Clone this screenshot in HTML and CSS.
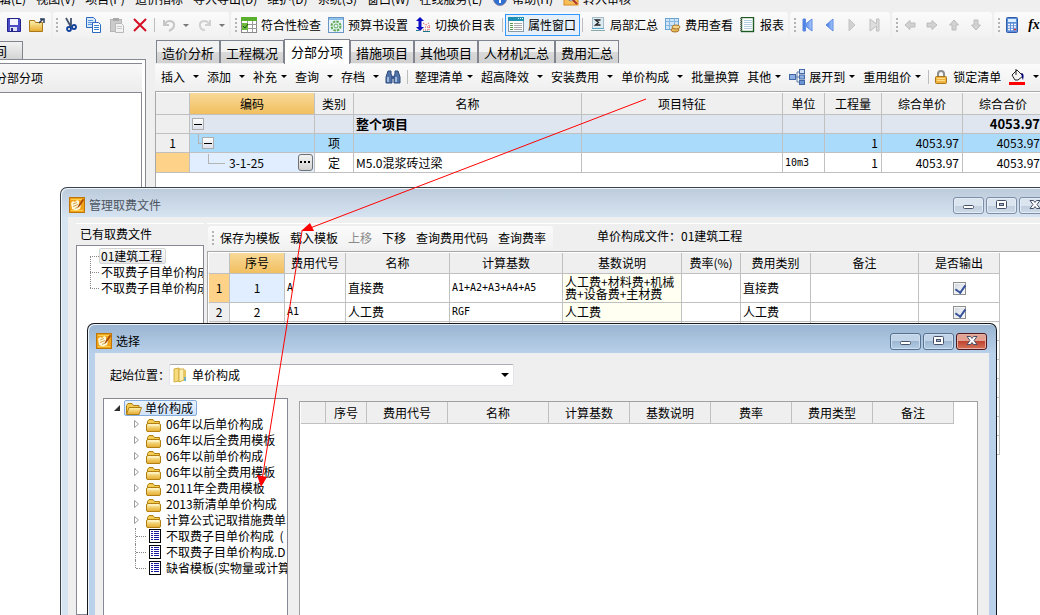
FILE: index.html
```html
<!DOCTYPE html>
<html lang="zh-CN">
<head>
<meta charset="utf-8">
<title>分部分项</title>
<link rel="stylesheet" href="styles.css">
</head>
<body>
<svg class="defs" aria-hidden="true">
  <defs>
    <linearGradient id="gold" x1="0" y1="0" x2="0" y2="1"><stop offset="0" stop-color="#fdf3b4"/><stop offset="1" stop-color="#e6a92c"/></linearGradient>
    <linearGradient id="blue" x1="0" y1="0" x2="1" y2="0"><stop offset="0" stop-color="#3c74e0"/><stop offset="1" stop-color="#a9c8fa"/></linearGradient>
    <symbol id="folder" viewBox="0 0 18 16">
      <path d="M1.500 13.500V5.500L3 3.500h4l1.500 2h5v2" fill="#f3cb52" stroke="#b07f10"/>
      <rect x=".500" y="7.500" width="14" height="8" rx="1.500" fill="url(#gold)" stroke="#b07f10"/>
      <path d="M2 9h11" stroke="#fffbe0"/>
    </symbol>
    <symbol id="folder-open" viewBox="0 0 18 16">
      <path d="M1.500 14V5.500L3 3.500h4l1.500 2h5.500v2" fill="#f3cb52" stroke="#b07f10"/>
      <path d="M1.500 14.500L4 7.500h12.500l-2.500 7z" fill="url(#gold)" stroke="#b07f10"/>
    </symbol>
    <symbol id="sheet" viewBox="0 0 14 16">
      <rect x="1.500" y="1.500" width="11" height="13" fill="#fff" stroke="#000"/>
      <path d="M3 3.500h2m1 0h5M3 5.500h2m1 0h5M3 7.500h2m1 0h5M3 9.500h2m1 0h5M3 11.500h2m1 0h5" stroke="#1a1a9c"/>
    </symbol>
    <symbol id="tri" viewBox="0 0 7 10"><path d="M1.500 1.500v7L5.500 5z" fill="#fff" stroke="#9a9a9a"/></symbol>
    <symbol id="app" viewBox="0 0 16 16">
      <rect x=".500" y=".500" width="15" height="15" fill="#f0a21c" stroke="#c07508"/>
      <path d="M2 2.500h12M2 13.500h12" stroke="#ffd24c"/>
      <path d="M2 6l2-2 2 1 2-2 2 1v3l2 1-1 4-4 1.500L3 12z" fill="#fff8d8"/>
      <path d="M4 7l4-1.500M4 9.500l5-2M6 11.500l4-2" stroke="#c88a2c" stroke-width=".800"/>
      <path d="M14 1.500L9.500 8l-1 3 2.500-2L15 3z" fill="#a84708"/>
    </symbol>
    <symbol id="arrow-l" viewBox="0 0 12 12"><path d="M1 6l5-4.500v2.500h5v4H6v2.500z" fill="#d2d2d2" stroke="#bcbcbc"/></symbol>
    <symbol id="min" viewBox="0 0 12 12"><rect x=".500" y="6.500" width="10" height="3" rx="1" fill="#fff" stroke="#465066"/></symbol>
    <symbol id="max" viewBox="0 0 12 12"><rect x=".500" y="1.500" width="10" height="8" rx="1" fill="#fff" stroke="#465066"/><rect x="3.500" y="4.500" width="4" height="2" fill="#a9b9cd" stroke="#465066"/></symbol>
    <symbol id="close" viewBox="0 0 12 12"><path d="M1 1.500h3.500L6 3.500l1.500-2H11L8 5.500l3 4H7.500L6 7.500l-1.500 2H1l3-4z" fill="#fff" stroke="#465066"/></symbol>
  </defs>
</svg>

<div class="app">
  <nav class="menubar">
    <button>编辑(E)</button><button>视图(V)</button><button>项目(P)</button><button>造价指标</button><button>导入导出(D)</button><button>维护(D)</button><button>系统(S)</button><button>窗口(W)</button><button>在线服务(L)</button>
    <button><svg class="icon" viewBox="0 0 16 16"><circle cx="8" cy="8" r="6.500" fill="#2e6fd0" stroke="#88a"/><path d="M8 9v3" stroke="#fff" stroke-width="2"/></svg>帮助(H)</button>
    <button><svg class="icon" viewBox="0 0 16 16"><rect x="1" y="2" width="14" height="12" fill="#f9bf57" stroke="#d88a20"/><circle cx="8" cy="7" r="3" fill="#fff" stroke="#888"/><path d="M10 9l4 4" stroke="#a33" stroke-width="2"/></svg>转入审核</button>
  </nav>

  <div class="toolbar-row">
    <div class="group first">
      <button class="ib" aria-label="保存"><svg class="icon" viewBox="0 0 16 16"><path d="M1.500 1.500h12l1 1v12h-13z" fill="#4b4bc6" stroke="#23238c"/><rect x="4" y="2" width="8" height="6" fill="#f4f4ff"/><rect x="4" y="10" width="7" height="4" fill="#dfe0f4"/><rect x="5" y="11" width="2" height="3" fill="#23238c"/></svg></button>
      <button class="ib" aria-label="打开"><svg class="icon" viewBox="0 0 16 16"><path d="M.500 14.500v-11h5l1 2h7v9z" fill="url(#gold)" stroke="#a8781a"/><path d="M10 6l4-4m-3 0h4v4" fill="none" stroke="#2c3c5c" stroke-width="1.500"/></svg></button>
    </div>
    <div class="group edit">
      <i class="grip"></i>
      <button class="ib" aria-label="剪切"><svg class="icon" viewBox="0 0 16 16"><path d="M3 1l5 9M8 1v9" stroke="#41536c" stroke-width="1.800"/><circle cx="6" cy="12" r="2" fill="none" stroke="#12419c" stroke-width="1.800"/><circle cx="11" cy="10" r="2" fill="none" stroke="#12419c" stroke-width="1.800"/></svg></button>
      <button class="ib" aria-label="复制"><svg class="icon" viewBox="0 0 16 16"><path d="M.500 .500h7l2 2v8h-9z" fill="#d8e8fb" stroke="#2a6bc0"/><path d="M2 3.500h5M2 5.500h5M2 7.500h4" stroke="#5b96dc"/><path d="M6.500 5.500h6l2 2v8h-8z" fill="#fff" stroke="#2a6bc0"/><path d="M8 8.500h5M8 10.500h5M8 12.500h5" stroke="#3c80d4"/></svg></button>
      <button class="ib" aria-label="粘贴"><svg class="icon" viewBox="0 0 16 16"><rect x="1.500" y="2.500" width="11" height="12" fill="#cbcbcb" stroke="#b4b4b4"/><rect x="4" y="1" width="6" height="3" fill="#a9a9a9"/><path d="M6.500 6.500h6l2 2v7h-8z" fill="#f2f2f2" stroke="#b9b9b9"/><path d="M8 9.500h5M8 11.500h5" stroke="#ccc"/></svg></button>
      <button class="ib" aria-label="删除"><svg class="icon" viewBox="0 0 16 16"><path d="M2 2l12 12M14 2L2 14" stroke="#d40f26" stroke-width="2"/></svg></button>
      <i class="sep"></i>
      <button class="ib" aria-label="撤销"><svg class="icon" viewBox="0 0 16 16"><path d="M3 3v5h5M4 7c3-5 10-3 9 2-.500 3-3 4-5 5" fill="none" stroke="#c6c6c6" stroke-width="2"/></svg></button>
      <i class="caret dim"></i>
      <button class="ib" aria-label="重做"><svg class="icon" viewBox="0 0 16 16"><path d="M13 3v5H8M12 7C9 2 2 4 3 9c.500 3 3 4 5 4" fill="none" stroke="#d0d0d0" stroke-width="2"/></svg></button>
      <i class="caret dim"></i>
    </div>
    <div class="group main">
      <i class="grip"></i>
      <button class="tb"><svg class="icon" viewBox="0 0 16 16"><rect x=".500" y=".500" width="15" height="15" fill="#fff" stroke="#888"/><rect width="16" height="4" fill="#58b02c"/><path d="M0 7.500h16M0 11.500h16M6.500 4v12M11.500 4v12" stroke="#999"/><rect x="1" y="6" width="6" height="7" fill="#6dbb3c"/><path d="M2 9l2 2 3-4" fill="none" stroke="#185010"/></svg>符合性检查</button>
      <button class="tb"><svg class="icon" viewBox="0 0 16 16"><rect x=".500" y=".500" width="15" height="15" fill="#e8f3fd" stroke="#6a96c4"/><path d="M1 2h14" stroke="#8ec0ec" stroke-width="2"/><circle cx="8" cy="9" r="4.500" fill="none" stroke="#61ac52" stroke-width="2" stroke-dasharray="2.500 1"/><circle cx="8" cy="9" r="2" fill="none" stroke="#61ac52"/></svg>预算书设置</button>
      <button class="tb"><svg class="icon" viewBox="0 0 16 16"><path d="M5 0l4 4H6.500v6H9l-4 4-4-4h2.500V4H1z" fill="#0b0bc4"/><path d="M8 6l3 2 3-2M8 13h6V7M10 10h5" fill="none" stroke="#d44" stroke-dasharray="1 1"/><path d="M8 14.500h7M1 13.500h3" stroke="#178"/></svg>切换价目表</button>
      <i class="sep"></i>
      <button class="tb checked"><svg class="icon" viewBox="0 0 16 16"><rect x=".500" y=".500" width="15" height="14" fill="#fff" stroke="#8a9aa8"/><rect width="16" height="4" fill="#1e90b4"/><path d="M10 1.500h5" stroke="#e8f8ff" stroke-dasharray="1 1"/><path d="M2 6.500h3M2 8.500h3M2 10.500h3M2 12.500h3" stroke="#569a50"/><path d="M6 6.500h8M6 8.500h8M6 10.500h8M6 12.500h8" stroke="#aaa"/></svg>属性窗口</button>
      <i class="sep"></i>
      <button class="tb"><svg class="icon" viewBox="0 0 16 16"><rect x="2.500" y=".500" width="11" height="11" fill="#dcebf2" stroke="#a6bcc8"/><path d="M10.500 3H5.500l3 2.500-3 2.500h5" fill="none" stroke="#222" stroke-width="1.300"/><path d="M1 13.500h14" stroke="#8aa"/><path d="M2 11.500h12" stroke="#5ac"/></svg>局部汇总</button>
      <button class="tb"><svg class="icon" viewBox="0 0 16 16"><rect x=".500" y="1.500" width="13" height="11" fill="#cfe5f7" stroke="#69a4d4"/><path d="M1 4.500h12M1 8.500h12M4.500 2v10M9.500 2v10" stroke="#84b8e0"/><ellipse cx="10" cy="13" rx="4" ry="2" fill="#e8b85c" stroke="#a8742c"/><ellipse cx="11" cy="10" rx="4" ry="2" fill="#f5d48c" stroke="#a8742c"/></svg>费用查看</button>
      <button class="tb"><svg class="icon" viewBox="0 0 16 16"><rect x="1.500" y=".500" width="12" height="14" fill="#fff" stroke="#1c5c24" stroke-width="1.400"/><path d="M1 1v14" stroke="#777" stroke-width="2" stroke-dasharray="1 1"/><path d="M4 3.500h8M4 5.500h8M4 7.500h8M4 9.500h8M4 11.500h8" stroke="#b5cde0"/></svg>报表</button>
    </div>
    <div class="group nav">
      <i class="grip"></i>
      <button class="ib" aria-label="第一条"><svg class="icon" viewBox="0 0 16 16"><path d="M3 2h2.500v5L12 2v12L5.500 9v5H3z" fill="url(#blue)" stroke="#5c8be4"/></svg></button>
      <button class="ib" aria-label="上一条"><svg class="icon" viewBox="0 0 16 16"><path d="M11 2v12L4 8z" fill="url(#blue)" stroke="#5c8be4"/></svg></button>
      <button class="ib" aria-label="下一条"><svg class="icon" viewBox="0 0 16 16"><path d="M5 2v12l6-6z" fill="#d2d2d2" stroke="#c4c4c4"/></svg></button>
      <button class="ib" aria-label="最后一条"><svg class="icon" viewBox="0 0 16 16"><path d="M13 2h-2.500v5L4 2v12l6.500-5v5H13z" fill="#dedede" stroke="#bfbfbf"/></svg></button>
    </div>
    <div class="group nav">
      <i class="grip"></i>
      <button class="ib" aria-label="左移"><svg class="icon small"><use href="#arrow-l"/></svg></button>
      <button class="ib" aria-label="右移"><svg class="icon small r180"><use href="#arrow-l"/></svg></button>
      <button class="ib" aria-label="上移"><svg class="icon small r90"><use href="#arrow-l"/></svg></button>
      <button class="ib" aria-label="下移"><svg class="icon small r270"><use href="#arrow-l"/></svg></button>
    </div>
    <div class="group last">
      <i class="grip"></i>
      <button class="ib calc" aria-label="计算器"><svg class="icon" viewBox="0 0 16 16"><rect x="2.500" y=".500" width="11" height="15" rx="1" fill="#5e8ed8" stroke="#2f5daa"/><rect x="4" y="2" width="8" height="3" fill="#dcefff"/><path d="M4 7.500h8M4 10h8M4 12.500h8" stroke="#fff" stroke-width="1.500" stroke-dasharray="2 1"/><path d="M10 12.500h2" stroke="#d33" stroke-width="1.500"/></svg></button>
      <button class="ib fx"><i>fx</i></button>
    </div>
  </div>

  <div class="workspace">
    <aside class="side">
      <button class="side-tab"><span>间</span></button>
      <div class="side-frame">
        <div class="side-title"><span>分部分项</span></div>
        <div class="side-list"></div>
      </div>
    </aside>
    <main class="content">
      <div class="tabs">
        <button>造价分析</button><button>工程概况</button><button class="active">分部分项</button><button>措施项目</button><button>其他项目</button><button>人材机汇总</button><button>费用汇总</button>
      </div>
      <div class="actions">
        <button class="wide">插入<i class="caret"></i></button>
        <button class="wide">添加<i class="caret"></i></button>
        <button>补充<i class="caret"></i></button>
        <button class="wide">查询<i class="caret"></i></button>
        <button class="wide">存档<i class="caret"></i></button>
        <button class="find" aria-label="查找"><svg class="icon" viewBox="0 0 16 16"><path d="M3 2h3v3l1 2v7H1V8z M10 2h3l2 6v6H9V7l1-2z" fill="#5273a8" stroke="#2b4a7c"/><path d="M6 7h4v3H6z" fill="#3c5a90"/><path d="M3 8v5M11 8v5" stroke="#bcd0ee" stroke-width="1.500"/></svg></button>
        <i class="sep"></i>
        <button>整理清单<i class="caret"></i></button>
        <button class="wide">超高降效<i class="caret"></i></button>
        <button class="wide">安装费用<i class="caret"></i></button>
        <button class="wide">单价构成<i class="caret"></i></button>
        <button>批量换算</button>
        <button>其他<i class="caret"></i></button>
        <button><svg class="icon" viewBox="0 0 16 16"><path d="M5 8h3V3h3M8 8h3M8 8v5h3" fill="none" stroke="#5c7ca8"/><rect x=".500" y="5.500" width="6" height="5" fill="#8cb0e4" stroke="#4468a4"/><rect x="10.500" y=".500" width="5" height="4" fill="#cfe0f8" stroke="#4468a4"/><rect x="10.500" y="6" width="5" height="4" fill="#8cb0e4" stroke="#4468a4"/><rect x="10.500" y="11.500" width="5" height="4" fill="#6c94d4" stroke="#4468a4"/></svg>展开到<i class="caret"></i></button>
        <button>重用组价<i class="caret"></i></button>
        <i class="sep"></i>
        <button class="lock"><svg class="icon" viewBox="0 0 16 16"><path d="M5 8V5a3 3 0 0 1 6 0v3" fill="none" stroke="#8c8c8c" stroke-width="2"/><rect x="2.500" y="7.500" width="11" height="7" rx="1" fill="#f0b43c" stroke="#a8741c"/><path d="M4 9.500h8M4 11.500h8" stroke="#fbdc90"/></svg>锁定清单</button>
        <button class="wide" aria-label="填充颜色"><svg class="icon" viewBox="0 0 16 16"><path d="M3 6l5-5 6 6-5 4H6z" fill="#f4f4f4" stroke="#222"/><path d="M7 0v6" stroke="#222"/><path d="M12 4c3 0 3 3 2 7-1-1-1-4-2-7z" fill="#000080"/><rect y="13" width="16" height="3" fill="#f00"/></svg><i class="caret"></i></button>
      </div>
      <div class="grid-wrap">
        <table class="grid items">
          <colgroup><col class="w34"><col class="w125"><col class="w39"><col class="w228"><col class="w201"><col class="w42"><col class="w57"><col class="w81"><col class="w81"></colgroup>
          <thead><tr><th></th><th class="hot">编码</th><th>类别</th><th>名称</th><th>项目特征</th><th>单位</th><th>工程量</th><th>综合单价</th><th>综合合价</th></tr></thead>
          <tbody>
            <tr class="total"><th></th><td><span class="code"><button class="box" aria-label="折叠"></button></span></td><td></td><td>整个项目</td><td></td><td></td><td></td><td></td><td class="num">4053.97</td></tr>
            <tr class="group-row"><th>1</th><td><span class="code"><i class="elbow e1"></i><button class="box" aria-label="折叠"></button></span></td><td class="mid">项</td><td></td><td></td><td></td><td class="num">1</td><td class="num">4053.97</td><td class="num">4053.97</td></tr>
            <tr><th class="mark"></th><td class="focus"><span class="code"><i class="elbow e2"></i>3-1-25<button class="more" aria-label="更多"><svg viewBox="0 0 11 3"><path d="M0 0h2v2H0zM4 0h2v2H4zM8 0h2v2H8z"/></svg></button></span></td><td class="mid">定</td><td>M5.0混浆砖过梁</td><td></td><td class="mono">10m3</td><td class="num">1</td><td class="num">4053.97</td><td class="num">4053.97</td></tr>
          </tbody>
        </table>
      </div>
    </main>
  </div>
</div>

<section class="window manage">
  <header><svg class="icon"><use href="#app"/></svg><h2>管理取费文件</h2>
    <button aria-label="最小化"><svg><use href="#min"/></svg></button><button aria-label="最大化"><svg><use href="#max"/></svg></button><button aria-label="关闭"><svg><use href="#close"/></svg></button></header>
  <div class="client manage-body">
    <div class="files">
      <h3>已有取费文件</h3>
      <ul class="file-list"><li><span class="sel">01建筑工程</span></li><li><span>不取费子目单价构成</span></li><li><span>不取费子目单价构成</span></li></ul>
    </div>
    <div class="fees">
      <div class="fee-bar">
        <div class="group fee-tools"><i class="grip"></i><button>保存为模板</button><button>载入模板</button><button disabled>上移</button><button>下移</button><button>查询费用代码</button><button>查询费率</button></div>
        <span class="fee-file">单价构成文件：01建筑工程</span>
      </div>
      <div class="fee-grid">
        <table class="grid">
          <colgroup><col class="w21"><col class="w55"><col class="w61"><col class="w104"><col class="w113"><col class="w119"><col class="w59"><col class="w70"><col class="w108"><col class="w81"></colgroup>
          <thead><tr><th></th><th class="hot">序号</th><th>费用代号</th><th>名称</th><th>计算基数</th><th>基数说明</th><th>费率(%)</th><th>费用类别</th><th>备注</th><th>是否输出</th></tr></thead>
          <tbody>
            <tr class="tall"><th class="mark">1</th><td class="mid focus">1</td><td class="mono">A</td><td>直接费</td><td class="mono">A1+A2+A3+A4+A5</td><td class="note">人工费+材料费+机械费+设备费+主材费</td><td></td><td>直接费</td><td></td><td class="mid"><input type="checkbox" checked aria-label="直接费输出"></td></tr>
            <tr><th>2</th><td class="mid">2</td><td class="mono">A1</td><td>人工费</td><td class="mono">RGF</td><td class="note">人工费</td><td></td><td>人工费</td><td></td><td class="mid"><input type="checkbox" checked aria-label="人工费输出"></td></tr>
            <tr><th></th><td></td><td></td><td></td><td></td><td></td><td></td><td></td><td></td><td></td></tr>
            <tr><th></th><td></td><td></td><td></td><td></td><td></td><td></td><td></td><td></td><td></td></tr>
            <tr><th></th><td></td><td></td><td></td><td></td><td></td><td></td><td></td><td></td><td></td></tr>
            <tr><th></th><td></td><td></td><td></td><td></td><td></td><td></td><td></td><td></td><td></td></tr>
            <tr><th></th><td></td><td></td><td></td><td></td><td></td><td></td><td></td><td></td><td></td></tr>
            <tr><th></th><td></td><td></td><td></td><td></td><td></td><td></td><td></td><td></td><td></td></tr>
            <tr><th></th><td></td><td></td><td></td><td></td><td></td><td></td><td></td><td></td><td></td></tr>
          </tbody>
        </table>
      </div>
    </div>
  </div>
</section>

<section class="window choose">
  <header><svg class="icon"><use href="#app"/></svg><h2>选择</h2>
    <button aria-label="最小化"><svg><use href="#min"/></svg></button><button aria-label="最大化"><svg><use href="#max"/></svg></button><button class="danger" aria-label="关闭"><svg><use href="#close"/></svg></button></header>
  <div class="client choose-body">
    <div class="place">
      <label for="place">起始位置：</label>
      <div class="combo">
        <svg class="icon" viewBox="0 0 16 16"><path d="M2 2l5-1v13l-5 1z" fill="#f6dc7c" stroke="#d2ac40"/><path d="M7 2h5v11l-5 2z" fill="#fbeeb0" stroke="#d2ac40"/><path d="M12 3h2v10l-3 1" fill="#e8c45c"/><path d="M13 10v4" stroke="#48a8e0" stroke-width="1.500"/></svg>
        <select id="place"><option>单价构成</option></select>
        <i class="caret"></i>
      </div>
    </div>
    <div class="panes">
      <ul class="tree">
        <li class="root"><i class="tri-open"></i><span class="sel"><svg class="fold"><use href="#folder-open"/></svg>单价构成</span></li>
        <li><svg class="tri"><use href="#tri"/></svg><svg class="fold"><use href="#folder"/></svg>06年以后单价构成</li>
        <li><svg class="tri"><use href="#tri"/></svg><svg class="fold"><use href="#folder"/></svg>06年以后全费用模板</li>
        <li><svg class="tri"><use href="#tri"/></svg><svg class="fold"><use href="#folder"/></svg>06年以前单价构成</li>
        <li><svg class="tri"><use href="#tri"/></svg><svg class="fold"><use href="#folder"/></svg>06年以前全费用模板</li>
        <li><svg class="tri"><use href="#tri"/></svg><svg class="fold"><use href="#folder"/></svg>2011年全费用模板</li>
        <li><svg class="tri"><use href="#tri"/></svg><svg class="fold"><use href="#folder"/></svg>2013新清单单价构成</li>
        <li><svg class="tri"><use href="#tri"/></svg><svg class="fold"><use href="#folder"/></svg>计算公式记取措施费单</li>
        <li class="leaf"><svg class="doc"><use href="#sheet"/></svg>不取费子目单价构成&nbsp; (</li>
        <li class="leaf"><svg class="doc"><use href="#sheet"/></svg>不取费子目单价构成.D</li>
        <li class="leaf end"><svg class="doc"><use href="#sheet"/></svg>缺省模板(实物量或计算</li>
      </ul>
      <div class="pick-grid">
        <table class="grid">
          <colgroup><col class="w25"><col class="w41"><col class="w81"><col class="w101"><col class="w81"><col class="w81"><col class="w81"><col class="w81"><col class="w81"></colgroup>
          <thead><tr><th></th><th>序号</th><th>费用代号</th><th>名称</th><th>计算基数</th><th>基数说明</th><th>费率</th><th>费用类型</th><th>备注</th></tr></thead>
        </table>
      </div>
    </div>
  </div>
</section>

<svg class="arrows" viewBox="0 0 1040 615" aria-hidden="true">
  <path d="M646 99L305 230M302 231L262 480" fill="none" stroke="#f00"/>
  <path d="M301 231l9-8 4 8zM261 487l-4-12 10 2z" fill="#f00"/>
</svg>
</body>
</html>
```
FILE: styles.css
```css
* { box-sizing: border-box; }
html, body { height: 100%; margin: 0; }
body {
  position: relative;
  overflow: hidden;
  background: #efefef;
  color: #000;
  font: 12px/16px "Noto Sans CJK SC", "Liberation Sans", sans-serif;
}
button, select, input { font: inherit; color: inherit; margin: 0; }
button { padding: 0; border: 0; background: none; display: flex; align-items: center; justify-content: center; white-space: nowrap; }
h2, h3 { margin: 0; font-size: 12px; font-weight: 400; }
ul { list-style: none; margin: 0; padding: 0; }
.defs { position: absolute; width: 0; height: 0; }
.icon { width: 16px; height: 16px; flex: none; }
.mono { font-family: "DejaVu Sans Mono", "Noto Sans CJK SC", monospace; font-size: 10px; }

.app { height: 100%; display: flex; flex-direction: column; }

.menubar { flex: none; height: 12px; margin-left: -13px; padding-bottom: 5px; display: flex; align-items: flex-end; gap: 10px; overflow: hidden; }
.menubar button { height: 16px; gap: 4px; }

.toolbar-row { flex: none; display: flex; gap: 2px; height: 26px; white-space: nowrap; }
.group { flex: none; display: flex; align-items: center; border-radius: 3px; background: linear-gradient(#fbfbfb, #f1f1f1); }
.grip { flex: none; width: 2px; height: 14px; background: repeating-linear-gradient(#b4b4b4 0 2px, transparent 2px 4px); }
.sep { flex: none; width: 1px; height: 14px; background: #bdbdbd; }
.caret { flex: none; width: 0; height: 0; border: 3px solid transparent; border-top-color: #000; border-bottom: 0; }
.caret.dim { border-top-color: #777; }
.ib { width: 22px; height: 22px; }
.first { width: 51px; padding-left: 3px; gap: 1px; }
.edit { width: 176px; padding-left: 3px; gap: 1px; }
.edit .grip { margin-right: 1px; }
.edit .sep { margin: 0 2px; }
.edit .caret { margin: 0 4px 0 2px; }
.main { width: 557px; padding-left: 4px; gap: 7px; }
.main .grip { margin-right: -3px; }
.tb { height: 22px; gap: 4px; }
.tb.checked { padding: 0 3px 0 2px; margin: 0 -5px; border: 1px solid #3399ff; background: #e6f0fa; }
.nav { width: 100px; padding-left: 4px; }
.nav .grip { margin-right: 1px; }
.icon.small { width: 12px; height: 12px; }
.r180 { transform: rotate(180deg); }
.r90 { transform: rotate(90deg); }
.r270 { transform: rotate(270deg); }
.last { flex: 1 0 46px; padding-left: 4px; }
.calc { margin-left: 1px; }
.fx { font: italic 700 14px "Liberation Serif", serif; }

.workspace { flex: 1; min-height: 0; display: flex; gap: 9px; }
.side { flex: none; width: 146px; padding-top: 3px; display: flex; flex-direction: column; }
.side-tab { width: 23px; height: 18px; border: 1px solid #80848f; border-width: 1px 1px 0 0; background: linear-gradient(#f2f2f2, #d4d4d4); overflow: hidden; justify-content: flex-start; font-size: 13px; }
.side-tab span { margin-left: -6px; }
.side-frame { flex: 1; display: flex; flex-direction: column; border: 1px solid #868993; border-width: 1px 1px 0 0; padding: 3px 3px 0 0; background: #fff; }
.side-title { height: 29px; border-top: 1px solid #868993; background: linear-gradient(#f8f8f8, #ececec); display: flex; align-items: center; }
.side-title span { margin-left: -5px; }
.side-list { flex: 1; border: 1px solid #868993; border-width: 1px 1px 0 0; background: #fff; }

.content { flex: 1; min-width: 0; display: flex; flex-direction: column; }
.tabs { flex: none; height: 26px; padding: 1px 0 0 1px; display: flex; align-items: flex-end; }
.tabs button { height: 23px; margin-bottom: 1px; padding: 2px 5px 0; border: 1px solid #80848f; border-bottom: 0; background: linear-gradient(#f2f2f2 50%, #dadada 50%, #d0d0d0); font-size: 13px; }
.tabs .active { height: 25px; margin-bottom: 0; padding: 0 6px 1px; background: #fff; }
.actions { flex: none; height: 27px; padding: 0 0 2px 6px; display: flex; align-items: center; gap: 8px; background: linear-gradient(#fbfbfb, #efefef); white-space: nowrap; overflow: hidden; }
.actions button { flex: none; gap: 4px; }
.actions .wide { gap: 8px; }
.actions .sep { margin: 0 -1px; }
.find { margin: 0 -1px 0 -2px; }
.lock { margin-left: -3px; }

.grid-wrap { flex: 1; overflow: hidden; border: 1px solid #a8a8a8; border-width: 1px 0 0 1px; background: #fff; padding-top: 1px; }
.grid { table-layout: fixed; width: 0; border-collapse: separate; border-spacing: 0; }
.grid th, .grid td { height: 19px; padding: 0 0 0 2px; border: 1px solid #c0c0c0; border-width: 0 1px 1px 0; font-weight: 400; text-align: left; line-height: 16px; white-space: nowrap; overflow: hidden; }
.grid th { padding: 0; background: #efefef; text-align: center; }
.grid thead th { height: 21px; }
.items thead th { height: 22px; }
.grid th.hot { background: linear-gradient(#f9d999, #f1bf5f); }
.grid th.mark { background: #ffd28a; }
.grid .num { text-align: right; padding-right: 3px; }
.grid .mid { text-align: center; padding: 0; }
.grid .focus { background: #e0eeff; }
.total td { background: #dfe6f0; font-size: 13px; font-weight: 700; }
.group-row td { background: #aadbfb; }
.items tr:last-child td { height: 20px; }
.code { display: flex; align-items: center; height: 18px; }
.box { flex: none; width: 12px; height: 12px; border: 1px solid #adadad; background: linear-gradient(#000, #000) center / 8px 1px no-repeat, linear-gradient(#fff, #dde0ea); }
.elbow { flex: none; height: 10px; align-self: flex-start; border: 1px solid #b4b4b4; border-width: 0 0 1px 1px; }
.e1 { width: 4px; margin-left: 6px; }
.e2 { width: 17px; margin: 0 4px 0 16px; }
.more { width: 15px; height: 17px; margin: 0 1px 0 auto; border: 1px solid #707070; border-radius: 3px; background: linear-gradient(#f4f4f4, #d2d2d2); }
.more svg { width: 11px; height: 3px; }

.w21 { width: 21px; } .w25 { width: 25px; } .w34 { width: 34px; } .w39 { width: 39px; }
.w41 { width: 41px; } .w42 { width: 42px; } .w55 { width: 55px; } .w57 { width: 57px; }
.w59 { width: 59px; } .w61 { width: 61px; } .w70 { width: 70px; } .w81 { width: 81px; }
.w101 { width: 101px; } .w104 { width: 104px; } .w108 { width: 108px; } .w113 { width: 113px; }
.w119 { width: 119px; } .w125 { width: 125px; } .w201 { width: 201px; } .w228 { width: 228px; }

.window { position: absolute; bottom: 0; display: flex; flex-direction: column; border: 1px solid #3c424a; border-bottom: 0; border-radius: 7px 7px 0 0; padding: 0 7px; box-shadow: inset 1px 1px 0 #eef4fa; }
.manage { left: 60px; top: 187px; right: -20px; background: linear-gradient(#bccbdb, #d7e4f2 30px); }
.choose { left: 87px; top: 323px; right: 43px; border-color: #15181c; background: linear-gradient(#99b4d1, #b9d1ea 30px); }
.window > header { flex: none; height: 29px; padding: 5px 2px 0 1px; display: flex; align-items: center; gap: 2px; }
.window h2 { flex: 1; padding-left: 2px; }
.manage h2 { color: #4c5560; }
.window > header button { width: 31px; height: 17px; border: 1px solid #7d8ea6; border-radius: 3px; background: linear-gradient(#dae5f0 50%, #bfcddc 50%, #cddae8); box-shadow: inset 0 0 0 1px #e4edf6; }
.choose > header button { border-color: #56708f; background: linear-gradient(#c1d4e8 50%, #9db7d3 50%, #b5cde6); box-shadow: inset 0 0 0 1px #cfdff0; }
.choose > header .danger { border-color: #4c1a1e; background: linear-gradient(#e2a292 45%, #c0442f 50%, #d4745a); box-shadow: inset 0 0 0 1px #e8b0a4; }
.window > header button svg { width: 12px; height: 12px; }
.client { flex: 1; min-height: 0; background: #efefef; }

.manage-body { padding: 6px 0 0 8px; display: flex; gap: 3px; }
.files { flex: none; width: 128px; border-top: 1px solid #fff; display: flex; flex-direction: column; }
.files h3 { height: 21px; padding: 2px 0 0 4px; }
.file-list { flex: 1; border: 1px solid #868993; background: #fff; overflow: hidden; padding-top: 2px; }
.file-list li { position: relative; display: flex; align-items: center; height: 16px; margin-left: 13px; }
.file-list li::before { content: ""; flex: none; width: 9px; border-top: 1px dotted #888; }
.file-list li + li::after { content: ""; position: absolute; left: 0; bottom: 8px; height: 16px; border-left: 1px dotted #888; }
.file-list span { padding: 0 3px 0 1px; white-space: nowrap; border: 1px solid transparent; line-height: 14px; }
.file-list .sel { border-color: #d4d4d4; border-radius: 2px; background: linear-gradient(#fafafa, #e8e8e8); }
.fees { flex: 1; min-width: 0; display: flex; flex-direction: column; border-top: 1px solid #fff; }
.fee-bar { display: flex; align-items: center; height: 27px; }
.fee-tools { height: 24px; width: 345px; padding-left: 4px; gap: 10px; margin-left: 1px; }
.fee-tools .grip { margin-right: -4px; }
.fee-tools button:disabled { color: #8a8a8a; }
.fee-file { margin: 0 0 4px 44px; }
.fee-grid { flex: 1; border: 1px solid #a8a8a8; border-width: 1px 0 0 1px; background: #fff; padding: 1px 0 0 1px; overflow: hidden; }
.fee-grid .tall th, .fee-grid .tall td { height: 29px; }
.grid .note { background: #fffff2; line-height: 12px; white-space: normal; }
.grid .mono { font-size: 10px; }
input[type="checkbox"] { appearance: none; display: block; position: relative; width: 13px; height: 13px; margin: 0 auto; border: 1px solid #8e8f8f; background: linear-gradient(135deg, #cfd5dd, #fff); box-shadow: inset 0 0 0 1px #f4f4f4; }
input[type="checkbox"]:checked::after { content: ""; position: absolute; left: 3px; top: 0; width: 5px; height: 8px; border: solid #36539b; border-width: 0 2px 2px 0; transform: rotate(35deg); }

.choose-body { padding: 10px 11px 0 8px; display: flex; flex-direction: column; gap: 11px; }
.place { display: flex; align-items: center; height: 24px; padding-left: 7px; }
.place label { width: 59px; white-space: nowrap; }
.combo { position: relative; width: 345px; height: 22px; display: flex; align-items: center; border: 1px solid #e2e3ea; border-top-color: #abadb3; border-radius: 2px; background: #fff; }
.combo .icon { position: absolute; left: 2px; pointer-events: none; }
.combo select { appearance: none; flex: 1; height: 20px; padding: 0 20px 0 22px; border: 0; background: none; }
.combo .caret { position: absolute; right: 4px; border-width: 4px 4px 0; pointer-events: none; }
.panes { flex: 1; min-height: 0; display: flex; gap: 11px; }
.tree { flex: none; width: 185px; border: 1px solid #868993; border-bottom: 0; background: #fff; padding-top: 1px; overflow: hidden; }
.tree li { display: flex; align-items: center; height: 16px; padding-left: 29px; white-space: nowrap; }
.tree .root { padding-left: 10px; }
.tri { flex: none; width: 7px; height: 10px; margin-right: 6px; }
.tri-open { flex: none; width: 0; height: 0; margin-right: 4px; border-left: 6px solid transparent; border-bottom: 6px solid #303030; }
.tree .sel { display: flex; align-items: center; height: 16px; padding-right: 3px; border: 1px solid #84acdd; border-radius: 2px; background: linear-gradient(#eaf3fe, #cfe2fb); }
.fold { flex: none; width: 18px; height: 16px; margin-right: 2px; }
.tree .leaf { position: relative; padding-left: 42px; }
.leaf::before { content: ""; position: absolute; left: 31px; top: 0; width: 1px; height: 16px; border-left: 1px dotted #888; }
.leaf::after { content: ""; position: absolute; left: 32px; top: 8px; width: 10px; border-top: 1px dotted #888; }
.leaf.end::before { height: 8px; }
.doc { flex: none; width: 14px; height: 16px; margin: 0 4px 0 2px; }
.pick-grid { flex: 1; min-width: 0; margin-top: 3px; border: 1px solid #a0a0a0; border-bottom: 0; background: #fff; padding: 0 0 0 1px; overflow: hidden; }
.pick-grid thead th { height: 22px; }

.arrows { position: absolute; left: 0; top: 0; width: 1040px; height: 615px; pointer-events: none; }
```
